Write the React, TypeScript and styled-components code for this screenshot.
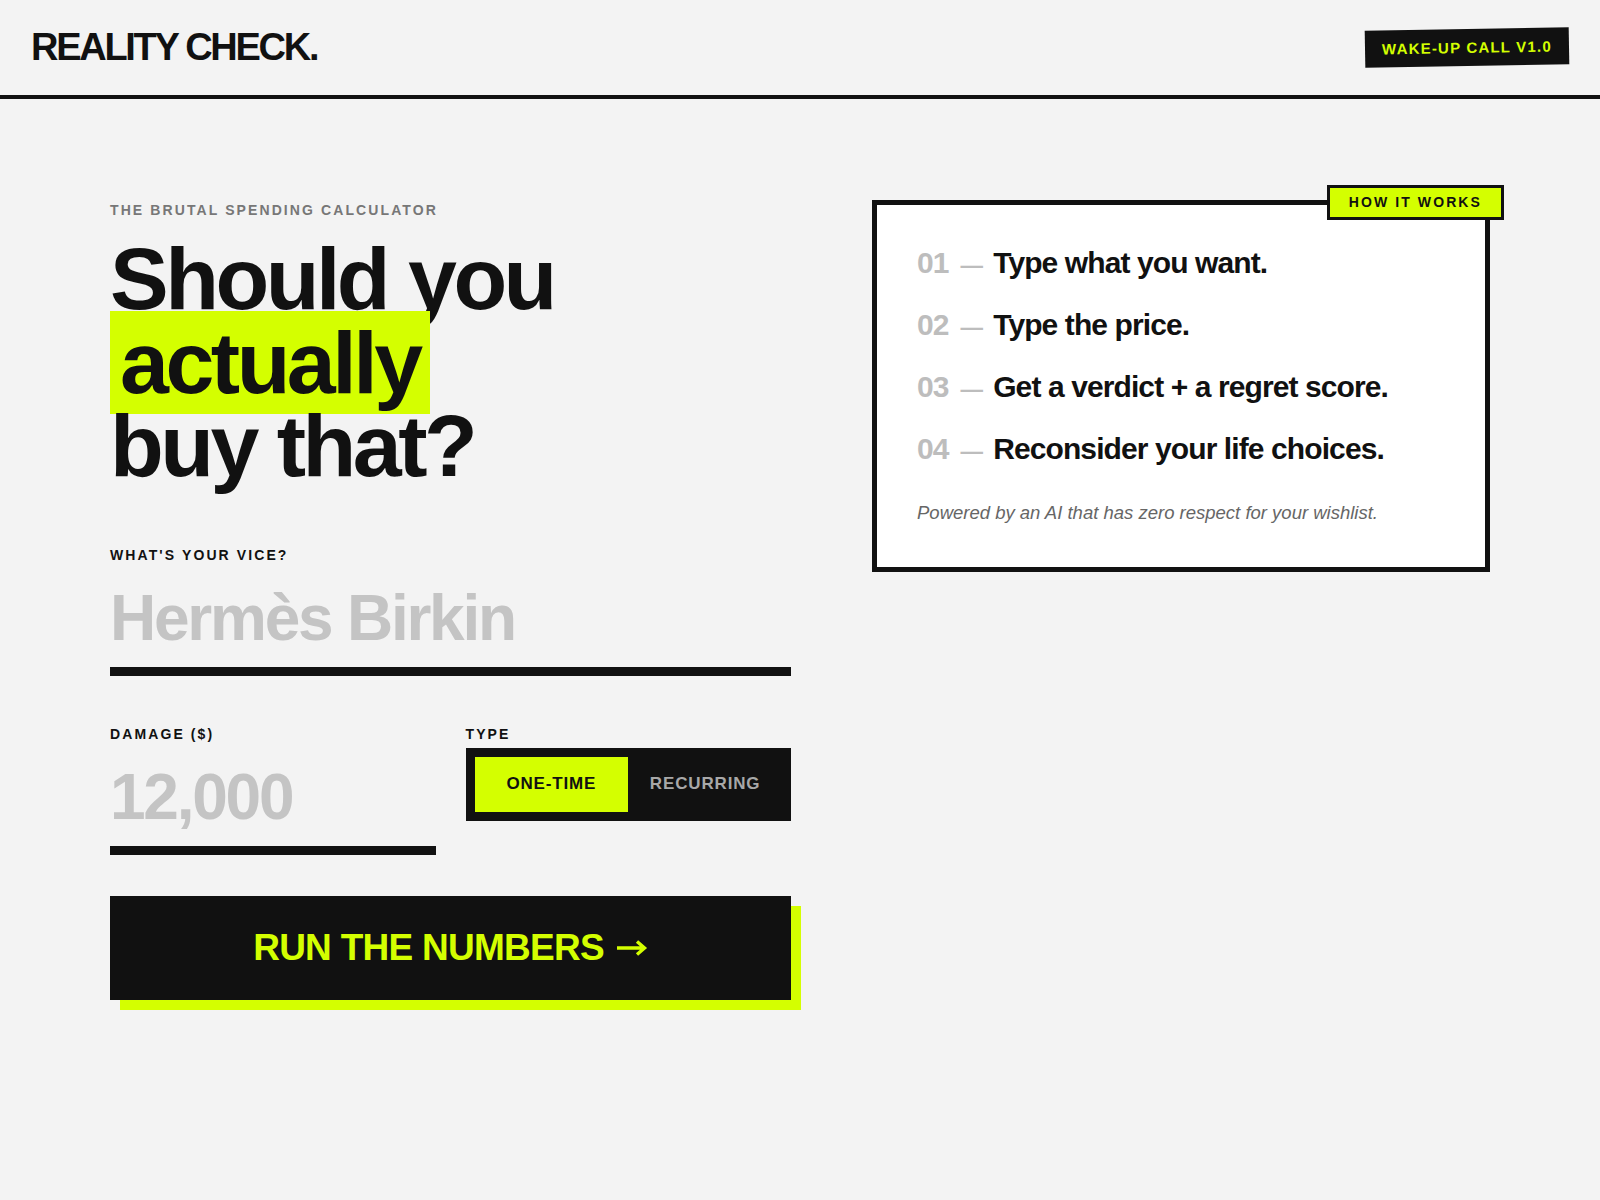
import { useState } from 'react';
import styled, { createGlobalStyle } from 'styled-components';

const lime = '#d4ff00';
const ink = '#111111';

const GlobalStyle = createGlobalStyle`
    * { box-sizing: border-box; }
    body {
        margin: 0;
        background: #f3f3f3;
        color: ${ink};
        font-family: 'Liberation Sans', Arial, Helvetica, sans-serif;
    }
`;

const steps = [
    'Type what you want.',
    'Type the price.',
    'Get a verdict + a regret score.',
    'Reconsider your life choices.',
];

export default function App() {
    const [mode, setMode] = useState<'one' | 'recurring'>('one');

    return (
        <>
            <GlobalStyle />
            <Header>
                <Logo>REALITY CHECK.</Logo>
                <Badge>WAKE-UP CALL V1.0</Badge>
            </Header>
            <Main>
                <LeftColumn>
                    <Eyebrow>THE BRUTAL SPENDING CALCULATOR</Eyebrow>
                    <Headline>
                        Should you
                        <br />
                        <Highlight>actually</Highlight>
                        <br />
                        buy that?
                    </Headline>

                    <Field>
                        <Label htmlFor="vice">WHAT'S YOUR VICE?</Label>
                        <BigInput id="vice" placeholder="Hermès Birkin" />
                    </Field>

                    <FieldRow>
                        <Field>
                            <Label htmlFor="damage">DAMAGE ($)</Label>
                            <BigInput id="damage" placeholder="12,000" inputMode="numeric" />
                        </Field>
                        <Field>
                            <Label as="span">TYPE</Label>
                            <Toggle>
                                <ToggleButton $active={mode === 'one'} onClick={() => setMode('one')}>
                                    ONE-TIME
                                </ToggleButton>
                                <ToggleButton
                                    $active={mode === 'recurring'}
                                    onClick={() => setMode('recurring')}
                                >
                                    RECURRING
                                </ToggleButton>
                            </Toggle>
                        </Field>
                    </FieldRow>

                    <RunButton>
                        RUN THE NUMBERS
                        <ArrowIcon viewBox="0 0 32 18" aria-hidden="true">
                            <path d="M1 9h27M21 2.5 28.5 9 21 15.5" />
                        </ArrowIcon>
                    </RunButton>
                </LeftColumn>

                <Card>
                    <CardTag>HOW IT WORKS</CardTag>
                    <StepList>
                        {steps.map((text, i) => (
                            <Step key={text}>
                                <StepNumber>{String(i + 1).padStart(2, '0')}</StepNumber>
                                <StepDash>—</StepDash>
                                <span>{text}</span>
                            </Step>
                        ))}
                    </StepList>
                    <CardNote>Powered by an AI that has zero respect for your wishlist.</CardNote>
                </Card>
            </Main>
        </>
    );
}

const Header = styled.header`
    display: flex;
    align-items: center;
    justify-content: space-between;
    height: 99px;
    padding: 0 31px;
    border-bottom: 4px solid ${ink};
`;

const Logo = styled.div`
    font-size: 38px;
    font-weight: 700;
    letter-spacing: -0.06em;
`;

const Badge = styled.div`
    background: ${ink};
    color: ${lime};
    font-size: 15px;
    font-weight: 700;
    letter-spacing: 0.08em;
    line-height: 19px;
    padding: 9px 17px;
    transform: rotate(-1deg);
`;

const Main = styled.main`
    display: grid;
    grid-template-columns: 681px 618px;
    column-gap: 81px;
    align-items: start;
    max-width: 1380px;
    margin: 0 auto;
    padding: 101px 0 120px;
`;

const LeftColumn = styled.section`
    display: flex;
    flex-direction: column;
    padding-top: 2px;
`;

const Eyebrow = styled.p`
    margin: 0;
    font-size: 14px;
    line-height: 17px;
    font-weight: 700;
    letter-spacing: 0.15em;
    color: #777777;
`;

const Headline = styled.h1`
    margin: 18px 0 59px;
    font-size: 88px;
    line-height: 0.95;
    font-weight: 700;
    letter-spacing: -0.04em;
`;

const Highlight = styled.span`
    background: ${lime};
    padding: 2px 10px;
`;

const Field = styled.div`
    display: flex;
    flex-direction: column;
`;

const FieldRow = styled.div`
    display: grid;
    grid-template-columns: 1fr 1fr;
    column-gap: 30px;
    margin-top: 50px;
`;

const Label = styled.label`
    display: block;
    margin-bottom: 5px;
    font-size: 14px;
    line-height: 17px;
    font-weight: 700;
    letter-spacing: 0.15em;
    color: ${ink};
`;

const BigInput = styled.input`
    width: 100%;
    height: 107px;
    padding: 0;
    border: 0;
    border-bottom: 9px solid ${ink};
    background: transparent;
    color: ${ink};
    font-family: inherit;
    font-size: 64px;
    font-weight: 700;
    letter-spacing: -0.035em;
    outline: none;

    &::placeholder {
        color: #c4c4c4;
    }
`;

const Toggle = styled.div`
    display: flex;
    height: 73px;
    padding: 9px;
    background: ${ink};
`;

const ToggleButton = styled.button<{ $active: boolean }>`
    flex: 1;
    border: 0;
    cursor: pointer;
    font-family: inherit;
    font-size: 17px;
    font-weight: 700;
    letter-spacing: 0.05em;
    background: ${(p) => (p.$active ? lime : 'transparent')};
    color: ${(p) => (p.$active ? ink : '#a8a8a8')};
`;

const RunButton = styled.button`
    display: flex;
    align-items: center;
    justify-content: center;
    gap: 12px;
    margin-top: 41px;
    width: 100%;
    height: 104px;
    border: 0;
    cursor: pointer;
    background: ${ink};
    color: ${lime};
    box-shadow: 10px 10px 0 ${lime};
    font-family: inherit;
    font-size: 37px;
    font-weight: 700;
    letter-spacing: -0.02em;
`;

const ArrowIcon = styled.svg`
    width: 32px;
    height: 18px;
    fill: none;
    stroke: currentColor;
    stroke-width: 3.4;
    stroke-linecap: butt;
    stroke-linejoin: miter;
`;

const Card = styled.aside`
    position: relative;
    background: #ffffff;
    border: 5px solid ${ink};
    padding: 40px 40px 42px;
`;

const CardTag = styled.div`
    position: absolute;
    top: -20px;
    right: -19px;
    background: ${lime};
    border: 3px solid ${ink};
    padding: 6px 19px;
    font-size: 14px;
    line-height: 17px;
    font-weight: 700;
    letter-spacing: 0.15em;
`;

const StepList = styled.ol`
    list-style: none;
    margin: 0;
    padding: 0;
    display: flex;
    flex-direction: column;
    gap: 26px;
`;

const Step = styled.li`
    display: flex;
    align-items: baseline;
    font-size: 30px;
    line-height: 36px;
    font-weight: 700;
    letter-spacing: -0.03em;
`;

const StepNumber = styled.span`
    color: #bdbdbd;
`;

const StepDash = styled.span`
    color: #bdbdbd;
    font-size: 0.75em;
    line-height: 1;
    margin: 0 11px 0 12px;
`;

const CardNote = styled.p`
    margin: 34px 0 0;
    font-size: 18.5px;
    line-height: 24px;
    font-style: italic;
    color: #666666;
`;
